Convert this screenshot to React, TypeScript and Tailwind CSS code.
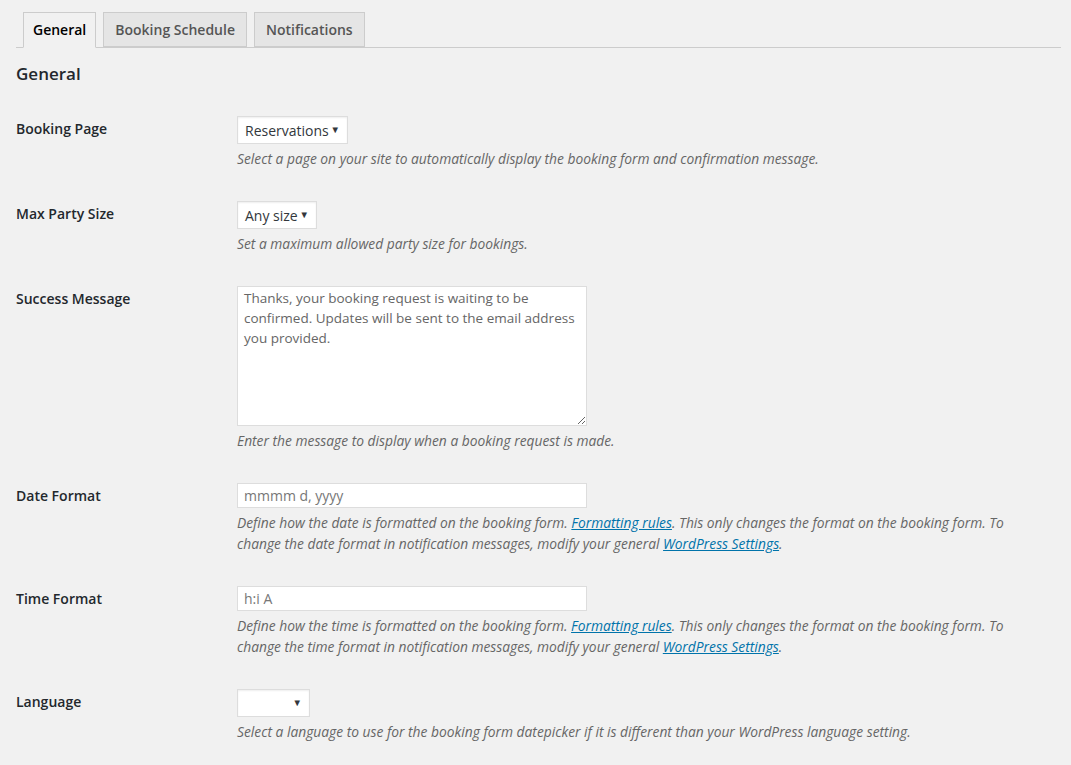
import React from 'react';

const font = { fontFamily: '"Open Sans", "Noto Sans", sans-serif' };

const Select = ({ label, width }: { label: string; width: string }) => (
  <div
    className={`flex items-center justify-between h-[28px] bg-white border border-[#ddd] shadow-[inset_0_1px_2px_rgba(0,0,0,0.07)] pl-[7px] pr-[7px] text-[14px] text-[#32373c] ${width}`}
  >
    <span>{label}</span>
    <span className="text-[9.5px] leading-none text-[#32373c]">▼</span>
  </div>
);

const Link = ({ children }: { children: React.ReactNode }) => (
  <a href="#" className="text-[#0073aa] underline">
    {children}
  </a>
);

const Row = ({
  label,
  children,
  desc,
}: {
  label: string;
  children: React.ReactNode;
  desc: React.ReactNode;
}) => (
  <div className="flex items-start pt-[15px] pb-[17px]">
    <div className="w-[221px] shrink-0 pt-[4px] text-[14px] leading-[18px] font-semibold text-[#23282d]">
      {label}
    </div>
    <div className="flex-1">
      {children}
      <p className="mt-[4px] text-[13.8px] leading-[21px] italic text-[#666] pr-[24px]">{desc}</p>
    </div>
  </div>
);

export default function App() {
  return (
    <div className="min-h-[765px] bg-[#f1f1f1] pl-[16px] pr-[10px]" style={font}>
      <div className="flex items-end pt-[12px] border-b border-[#ccc] pl-[7px] gap-[7px]">
        <div className="h-[36px] -mb-px px-[9px] border border-[#ccc] border-b-[#f1f1f1] bg-[#f1f1f1] text-[14px] leading-[33px] font-semibold text-black">
          General
        </div>
        <div className="h-[35px] px-[11px] border border-[#ccc] bg-[#e5e5e5] text-[14px] leading-[33px] font-semibold text-[#555]">
          Booking Schedule
        </div>
        <div className="h-[35px] px-[11px] border border-[#ccc] bg-[#e5e5e5] text-[14px] leading-[33px] font-semibold text-[#555]">
          Notifications
        </div>
      </div>

      <h2 className="mt-[15px] text-[17px] leading-[22px] font-semibold text-[#23282d]">General</h2>

      <div className="mt-[16px]">
        <Row
          label="Booking Page"
          desc="Select a page on your site to automatically display the booking form and confirmation message."
        >
          <Select label="Reservations" width="w-[111px]" />
        </Row>
        <Row label="Max Party Size" desc="Set a maximum allowed party size for bookings.">
          <Select label="Any size" width="w-[80px]" />
        </Row>
        <Row label="Success Message" desc="Enter the message to display when a booking request is made.">
          <textarea
            readOnly
            className="block w-[350px] h-[140px] bg-white border border-[#ddd] px-[6px] py-[1px] text-[13.5px] leading-[20px] text-[#666] outline-none"
            value="Thanks, your booking request is waiting to be confirmed. Updates will be sent to the email address you provided."
          />
        </Row>
        <Row
          label="Date Format"
          desc={
            <>
              Define how the date is formatted on the booking form. <Link>Formatting rules</Link>. This only changes
              the format on the booking form. To change the date format in notification messages, modify your general{' '}
              <Link>WordPress Settings</Link>.
            </>
          }
        >
          <input
            readOnly
            value="mmmm d, yyyy"
            className="block w-[350px] h-[25px] bg-white border border-[#ddd] px-[6px] text-[14px] text-[#777] outline-none"
          />
        </Row>
        <Row
          label="Time Format"
          desc={
            <>
              Define how the time is formatted on the booking form. <Link>Formatting rules</Link>. This only changes
              the format on the booking form. To change the time format in notification messages, modify your general{' '}
              <Link>WordPress Settings</Link>.
            </>
          }
        >
          <input
            readOnly
            value="h:i A"
            className="block w-[350px] h-[25px] bg-white border border-[#ddd] px-[6px] text-[14px] text-[#777] outline-none"
          />
        </Row>
        <Row
          label="Language"
          desc="Select a language to use for the booking form datepicker if it is different than your WordPress language setting."
        >
          <Select label="" width="w-[73px]" />
        </Row>
      </div>
    </div>
  );
}
